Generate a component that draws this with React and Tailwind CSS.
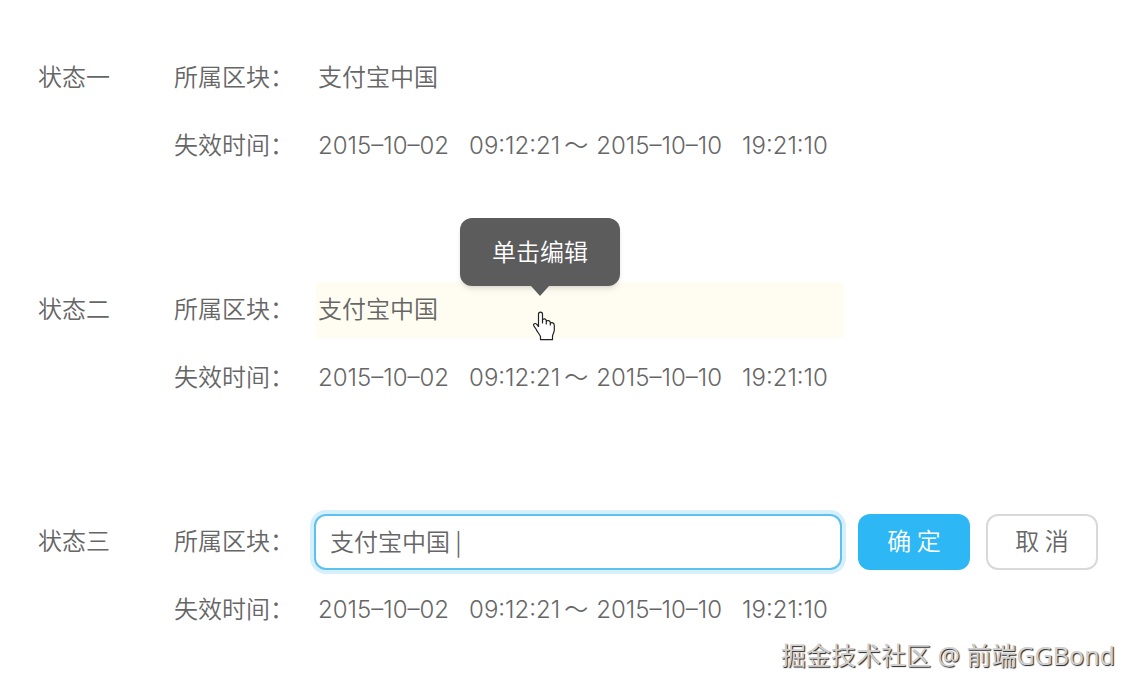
import { useState } from "react";

function HandCursor() {
  return (
    <svg viewBox="0 0 22 30" className="h-[30px] w-[22px]" aria-hidden="true">
      <path
        d="M5.5 16V3.2C5.5 0.3 9.5 0.3 9.5 3.2V12V9C10.5 7 13.3 7.6 13.3 10V13V10.6C14.3 8.8 17 9.4 17.3 11.4V14V12.2C18.8 10.8 21.3 12 21.3 14.5V19C21.3 22 19.5 23 19.5 25.5V28.7H7.5V25.5C6 22.5 4 20.5 3 18L0.8 14.8C-0.2 12.8 2.2 11.8 3.6 13.2L5.5 15.5"
        fill="#fff"
        stroke="#222"
        strokeWidth="1.2"
        strokeLinejoin="round"
      />
    </svg>
  );
}

function Moment({ date, time }) {
  return (
    <span className="flex gap-5">
      <span>{date}</span>
      <span>{time}</span>
    </span>
  );
}

function Group({ title, children }) {
  return (
    <section className="flex items-start">
      <h2 className="flex h-14 w-[136px] shrink-0 items-center pb-1">{title}</h2>
      <div className="flex min-w-0 grow flex-col gap-3">
        {children}
        <Row label="失效时间：">
          <p className="flex pl-1 font-['Inter','Noto_Sans_CJK_SC',sans-serif] whitespace-nowrap">
            <Moment date="2015–10–02" time="09:12:21" />
            <span className="pr-2 pl-1">～</span>
            <Moment date="2015–10–10" time="19:21:10" />
          </p>
        </Row>
      </div>
    </section>
  );
}

function Row({ label, htmlFor, children }) {
  return (
    <div className="flex h-14 items-center">
      <label htmlFor={htmlFor} className="w-[140px] shrink-0 pb-1 whitespace-nowrap">
        {label}
      </label>
      {children}
    </div>
  );
}

export default function App() {
  const [value, setValue] = useState("支付宝中国 |");
  return (
    <main className="flex flex-col bg-white pt-[50px] pr-[21px] pl-[38px] font-['Noto_Sans_CJK_SC',sans-serif] text-2xl font-[350] text-[#666]">
      <div className="flex flex-col gap-[108px]">
        <Group title="状态一">
          <Row label="所属区块：">
            <p className="pb-1 pl-1">支付宝中国</p>
          </Row>
        </Group>
        <Group title="状态二">
          <Row label="所属区块：">
            <div className="relative ml-0.5 flex h-14 w-[528px] items-center bg-[#fffdf2] pb-1 pl-0.5">
              支付宝中国
              <div
                role="tooltip"
                className="absolute -top-16 left-36 flex h-[68px] w-40 items-center justify-center rounded-xl bg-[#5c5c5c] pb-0.5 text-white shadow-md"
              >
                单击编辑
                <svg viewBox="0 0 18 10" className="absolute top-full h-2.5 w-[18px]" aria-hidden="true">
                  <path d="M0 0H18L9 10Z" fill="#5c5c5c" />
                </svg>
              </div>
              <div className="absolute top-[29px] left-[217px]">
                <HandCursor />
              </div>
            </div>
          </Row>
        </Group>
        <Group title="状态三">
          <Row label="所属区块：" htmlFor="block">
            <div className="flex items-center gap-4">
              <input
                id="block"
                value={value}
                onChange={(e) => setValue(e.target.value)}
                className="h-14 w-[528px] rounded-xl border-2 border-[#5cc1ee] bg-white px-3.5 pb-1 ring-4 ring-[#d5effb] outline-none"
              />
              <button className="h-14 w-28 rounded-xl bg-[#2db7f5] pb-1 text-white">确 定</button>
              <button className="h-14 w-28 rounded-xl border-2 border-[#d9d9d9] bg-white pb-1">取 消</button>
            </div>
          </Row>
        </Group>
      </div>
      <footer className="self-end font-['Noto_Sans','Noto_Sans_CJK_SC',sans-serif] text-[25px] leading-[34px] font-normal text-[#d0d0d0] [text-shadow:1px_1px_1px_#222]">
        掘金技术社区 @ 前端GGBond
      </footer>
    </main>
  );
}
